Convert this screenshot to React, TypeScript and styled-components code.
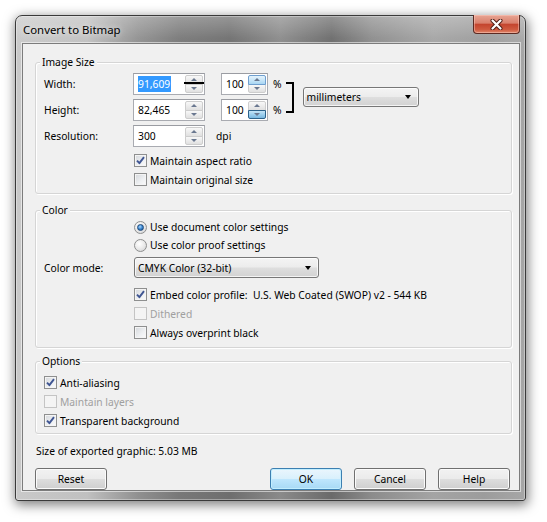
import React from "react";
import styled, { createGlobalStyle, css } from "styled-components";

const GlobalStyle = createGlobalStyle`
  html, body { margin: 0; padding: 0; background: #ffffff; }
  body {
    font-family: "Noto Sans", "DejaVu Sans", sans-serif;
    font-size: 10.3px;
    line-height: 14px;
    color: #000000;
  }
  * { box-sizing: border-box; }
`;

const Page = styled.div`
  width: 547px;
  height: 522px;
  padding: 15px 0 0 15px;
  overflow: hidden;
`;

const Window = styled.div`
  width: 511px;
  height: 486px;
  display: flex;
  flex-direction: column;
  padding: 0 5px 9px 6px;
  border: 1px solid #3a3a3a;
  border-radius: 7px 7px 3px 3px;
  background:
    linear-gradient(180deg, rgba(255,255,255,0.28) 0px, rgba(255,255,255,0.05) 22px, rgba(0,0,0,0) 40px),
    linear-gradient(90deg, #c9c9c9 0%, #c0c0c0 14%, #909090 24%, #787878 32%, #6e6e6e 42%, #8a8a8a 52%, #6a6a6a 62%, #8c8c8c 70%, #a4a4a4 82%, #9c9c9c 92%, #a6a6a6 100%);
  box-shadow: 1px 3px 12px 1px rgba(0, 0, 0, 0.5), inset 0 0 0 1px rgba(255,255,255,0.35);
`;

const TitleBar = styled.div`
  height: 27px;
  display: flex;
  align-items: flex-start;
`;

const TitleText = styled.div`
  flex: 1;
  height: 27px;
  display: flex;
  align-items: center;
  padding-left: 1px;
  font-size: 11.4px;
  color: #000;
  text-shadow: 0 0 6px rgba(255,255,255,0.9);
`;

const CloseButton = styled.div`
  width: 47px;
  height: 19px;
  margin-top: -1px;
  display: flex;
  align-items: center;
  justify-content: center;
  border: 1px solid #5c2a22;
  border-top: none;
  border-radius: 0 0 4px 4px;
  background: linear-gradient(180deg, #e8a594 0%, #d9806c 45%, #c4452e 52%, #cf5a3f 80%, #e0876a 100%);
  box-shadow: inset 0 0 0 1px rgba(255, 210, 200, 0.45);
`;

const Client = styled.div`
  flex: 1;
  display: flex;
  flex-direction: column;
  background: #f0f0f0;
  border: 1px solid #7c7c7c;
  box-shadow: 0 0 0 1px rgba(255, 255, 255, 0.55);
  padding: 0 7px 0 12px;
`;

const Group = styled.div<{ $mt: number; $pt: number; $pb: number }>`
  position: relative;
  margin-top: ${(p) => p.$mt}px;
  padding: ${(p) => p.$pt}px 6px ${(p) => p.$pb}px 8px;
  border: 1px solid #d5d5d5;
  border-radius: 3px;
  box-shadow: inset 1px 1px 0 #ffffff, 1px 1px 0 #ffffff;
`;

const Caption = styled.span`
  position: absolute;
  top: -8px;
  left: 4px;
  padding: 0 2px;
  background: #f0f0f0;
  line-height: 14px;
`;

const Stack = styled.div<{ $gap?: number; $mt?: number }>`
  display: flex;
  flex-direction: column;
  gap: ${(p) => p.$gap ?? 0}px;
  margin-top: ${(p) => p.$mt ?? 0}px;
`;

const SizeArea = styled.div`
  display: flex;
  align-items: center;
`;

const FieldRow = styled.div<{ $h?: number }>`
  display: flex;
  align-items: center;
  height: ${(p) => p.$h ?? 22}px;
`;

const FieldLabel = styled.span<{ $w?: number }>`
  width: ${(p) => p.$w ?? 89}px;
  flex: none;
`;

const SpinBox = styled.div<{ $w: number; $ml?: number }>`
  position: relative;
  width: ${(p) => p.$w}px;
  height: 22px;
  margin-left: ${(p) => p.$ml ?? 0}px;
  display: flex;
  align-items: stretch;
  padding: 1px;
  background: #ffffff;
  border: 1px solid #a9abb1;
  border-top-color: #9a9ca2;
  flex: none;
`;

const SpinValue = styled.span`
  flex: 1;
  display: flex;
  align-items: center;
  padding-left: 3px;
`;

const Selected = styled.span`
  background: #3399ff;
  color: #ffffff;
  line-height: 16px;
  padding-right: 1px;
`;

const Spinner = styled.span`
  width: 18px;
  display: flex;
  flex-direction: column;
  flex: none;
`;

type SpinState = "normal" | "hover" | "pressed";

const SpinHalf = styled.span<{ $state?: SpinState; $pos: "up" | "down" }>`
  flex: 1;
  display: flex;
  align-items: center;
  justify-content: center;
  border: 1px solid #cdcdcd;
  border-radius: ${(p) => (p.$pos === "up" ? "2px 2px 0 0" : "0 0 2px 2px")};
  background: linear-gradient(180deg, #f8f8f8 0%, #ececec 50%, #e0e0e0 100%);
  & + & { margin-top: -1px; }
  ${(p) =>
    p.$state === "hover" &&
    css`
      border-color: #6f9fcf;
      background: linear-gradient(180deg, #e4f3fc 0%, #c9e6f8 50%, #a9d6f3 100%);
      position: relative;
      z-index: 1;
    `}
  ${(p) =>
    p.$state === "pressed" &&
    css`
      border-color: #2c628b;
      background: linear-gradient(180deg, #c4e4f6 0%, #9ccfee 50%, #7ab8e0 100%);
      position: relative;
      z-index: 1;
    `}
`;

const SpinArrow = styled.span<{ $dir: "up" | "down" }>`
  width: 0;
  height: 0;
  border-left: 3px solid transparent;
  border-right: 3px solid transparent;
  ${(p) =>
    p.$dir === "up"
      ? css`border-bottom: 3px solid #6a7890;`
      : css`border-top: 3px solid #6a7890;`}
`;

const LinkMark = styled.span`
  position: absolute;
  top: 8px;
  right: 0;
  width: 20px;
  height: 2px;
  background: #000000;
  z-index: 2;
`;

const Unit = styled.span<{ $ml: number }>`
  margin-left: ${(p) => p.$ml}px;
`;

const Bracket = styled.div`
  width: 8px;
  height: 31px;
  margin-left: 4px;
  border: 2px solid #000000;
  border-left: none;
  flex: none;
`;

const Select = styled.div<{ $w: number; $h: number; $ml?: number }>`
  width: ${(p) => p.$w}px;
  height: ${(p) => p.$h}px;
  margin-left: ${(p) => p.$ml ?? 0}px;
  display: flex;
  align-items: center;
  justify-content: space-between;
  padding: 0 7px 0 3px;
  border: 1px solid #777777;
  border-radius: 3px;
  background: linear-gradient(180deg, #f4f4f4 0%, #ececec 48%, #dedede 52%, #d2d2d2 100%);
  box-shadow: inset 0 0 0 1px rgba(255, 255, 255, 0.75);
  flex: none;
`;

const DropArrow = styled.span`
  width: 0;
  height: 0;
  border-left: 3.5px solid transparent;
  border-right: 3.5px solid transparent;
  border-top: 4px solid #000000;
`;

const CheckRow = styled.div<{ $indent?: number; $h?: number }>`
  display: flex;
  align-items: center;
  height: ${(p) => p.$h ?? 19}px;
  padding-left: ${(p) => p.$indent ?? 0}px;
`;

const Box = styled.span<{ $disabled?: boolean }>`
  width: 13px;
  height: 13px;
  flex: none;
  display: flex;
  align-items: center;
  justify-content: center;
  border: 1px solid ${(p) => (p.$disabled ? "#c4c4c4" : "#8e8f8f")};
  background: ${(p) =>
    p.$disabled
      ? "#f4f4f4"
      : "linear-gradient(135deg, #d4d7db 0%, #eef0f2 60%, #fbfbfb 100%)"};
  box-shadow: inset 0 0 0 1px ${(p) => (p.$disabled ? "#f4f4f4" : "#f4f4f4")};
`;

const Round = styled.span<{ $checked?: boolean }>`
  width: 13px;
  height: 13px;
  margin-left: 1px;
  flex: none;
  border-radius: 50%;
  display: flex;
  align-items: center;
  justify-content: center;
  border: 1px solid #8e8f8f;
  background: radial-gradient(circle at 40% 35%, #ffffff 0%, #e8e8e8 55%, #c9cbce 100%);
`;

const RadioDot = styled.span`
  width: 7px;
  height: 7px;
  border-radius: 50%;
  border: 1px solid #1f4a7a;
  background: radial-gradient(circle at 40% 35%, #a8d8ff 0%, #3b86cf 50%, #164f8f 100%);
`;

const OptionText = styled.span<{ $disabled?: boolean; $w?: number }>`
  margin-left: 3px;
  color: ${(p) => (p.$disabled ? "#a0a0a0" : "#000000")};
  white-space: nowrap;
  ${(p) => p.$w !== undefined && css`width: ${p.$w}px; flex: none;`}
`;

const StatusText = styled.div`
  margin-top: 10px;
  padding-left: 1px;
  line-height: 14px;
`;

const ButtonBar = styled.div`
  display: flex;
  align-items: center;
  margin-top: 10px;
  padding-right: 2px;
  gap: 12px;
`;

const Spacer = styled.div`
  flex: 1;
`;

const Button = styled.div<{ $primary?: boolean }>`
  width: 72px;
  height: 22px;
  display: flex;
  align-items: center;
  justify-content: center;
  color: #000000;
  border: 1px solid #707070;
  border-radius: 3px;
  background: linear-gradient(180deg, #f2f2f2 0%, #ebebeb 48%, #dddddd 52%, #cfcfcf 100%);
  box-shadow: inset 0 0 0 1px #fbfbfb;
  ${(p) =>
    p.$primary &&
    css`
      border-color: #3c7fb1;
      background: linear-gradient(180deg, #eaf6fd 0%, #d9f0fc 48%, #bee6fd 52%, #a7d9f5 100%);
      box-shadow: inset 0 0 0 1px #c2eeff;
    `}
`;

function Spin({
  width,
  ml,
  value,
  selected,
  linked,
  up = "normal",
  down = "normal",
}: {
  width: number;
  ml?: number;
  value: string;
  selected?: boolean;
  linked?: boolean;
  up?: SpinState;
  down?: SpinState;
}) {
  return (
    <SpinBox $w={width} $ml={ml}>
      <SpinValue>{selected ? <Selected>{value}</Selected> : value}</SpinValue>
      <Spinner>
        <SpinHalf $pos="up" $state={up}>
          <SpinArrow $dir="up" />
        </SpinHalf>
        <SpinHalf $pos="down" $state={down}>
          <SpinArrow $dir="down" />
        </SpinHalf>
      </Spinner>
      {linked && <LinkMark />}
    </SpinBox>
  );
}

function Check({
  label,
  checked,
  disabled,
  indent,
  labelWidth,
  children,
}: {
  label: string;
  checked?: boolean;
  disabled?: boolean;
  indent?: number;
  labelWidth?: number;
  children?: React.ReactNode;
}) {
  return (
    <CheckRow $indent={indent}>
      <Box $disabled={disabled}>
        {checked && (
          <svg width="9" height="9" viewBox="0 0 9 9">
            <path d="M1 4.6 L3.4 7.2 L8 1.2" fill="none" stroke="#3f5592" strokeWidth="1.9" strokeLinejoin="round" />
          </svg>
        )}
      </Box>
      <OptionText $disabled={disabled} $w={labelWidth}>
        {label}
      </OptionText>
      {children}
    </CheckRow>
  );
}

function Radio({ label, checked }: { label: string; checked?: boolean }) {
  return (
    <CheckRow $indent={89} $h={18}>
      <Round>{checked && <RadioDot />}</Round>
      <OptionText>{label}</OptionText>
    </CheckRow>
  );
}

export default function App() {
  return (
    <>
      <GlobalStyle />
      <Page>
        <Window>
          <TitleBar>
            <TitleText>Convert to Bitmap</TitleText>
            <CloseButton aria-label="Close">
              <svg width="13" height="11" viewBox="0 0 13 11">
                <path d="M2.5 1.5 L10.5 9.5 M10.5 1.5 L2.5 9.5" stroke="#4a1a12" strokeWidth="4" strokeLinecap="round" />
                <path d="M2.5 1.5 L10.5 9.5 M10.5 1.5 L2.5 9.5" stroke="#ffffff" strokeWidth="2.2" strokeLinecap="round" />
              </svg>
            </CloseButton>
          </TitleBar>
          <Client>
            <Group $mt={18} $pt={10} $pb={4}>
              <Caption>Image Size</Caption>
              <Stack $gap={4}>
                <SizeArea>
                  <Stack $gap={4}>
                    <FieldRow>
                      <FieldLabel>Width:</FieldLabel>
                      <Spin width={72} value="91,609" selected linked />
                      <Spin width={47} ml={16} value="100" up="hover" />
                      <Unit $ml={5}>%</Unit>
                    </FieldRow>
                    <FieldRow>
                      <FieldLabel>Height:</FieldLabel>
                      <Spin width={72} value="82,465" />
                      <Spin width={47} ml={16} value="100" down="pressed" />
                      <Unit $ml={5}>%</Unit>
                    </FieldRow>
                  </Stack>
                  <Bracket />
                  <Select $w={116} $h={20} $ml={9}>
                    <span>millimeters</span>
                    <DropArrow />
                  </Select>
                </SizeArea>
                <FieldRow>
                  <FieldLabel>Resolution:</FieldLabel>
                  <Spin width={72} value="300" />
                  <Unit $ml={11}>dpi</Unit>
                </FieldRow>
              </Stack>
              <Stack $mt={4}>
                <Check indent={90} label="Maintain aspect ratio" checked />
                <Check indent={90} label="Maintain original size" />
              </Stack>
            </Group>

            <Group $mt={16} $pt={7} $pb={5}>
              <Caption>Color</Caption>
              <Radio label="Use document color settings" checked />
              <Radio label="Use color proof settings" />
              <FieldRow $h={21} style={{ marginTop: 3 }}>
                <FieldLabel $w={90}>Color mode:</FieldLabel>
                <Select $w={185} $h={21}>
                  <span>CMYK Color (32-bit)</span>
                  <DropArrow />
                </Select>
              </FieldRow>
              <Stack $mt={7}>
                <Check indent={90} label="Embed color profile:" checked labelWidth={103}>
                  <span>U.S. Web Coated (SWOP) v2 - 544 KB</span>
                </Check>
                <Check indent={90} label="Dithered" disabled />
                <Check indent={90} label="Always overprint black" />
              </Stack>
            </Group>

            <Group $mt={13} $pt={11} $pb={3}>
              <Caption>Options</Caption>
              <Check label="Anti-aliasing" checked />
              <Check label="Maintain layers" disabled />
              <Check label="Transparent background" checked />
            </Group>

            <StatusText>Size of exported graphic: 5.03 MB</StatusText>

            <ButtonBar>
              <Button>Reset</Button>
              <Spacer />
              <Button $primary>OK</Button>
              <Button>Cancel</Button>
              <Button>Help</Button>
            </ButtonBar>
          </Client>
        </Window>
      </Page>
    </>
  );
}
